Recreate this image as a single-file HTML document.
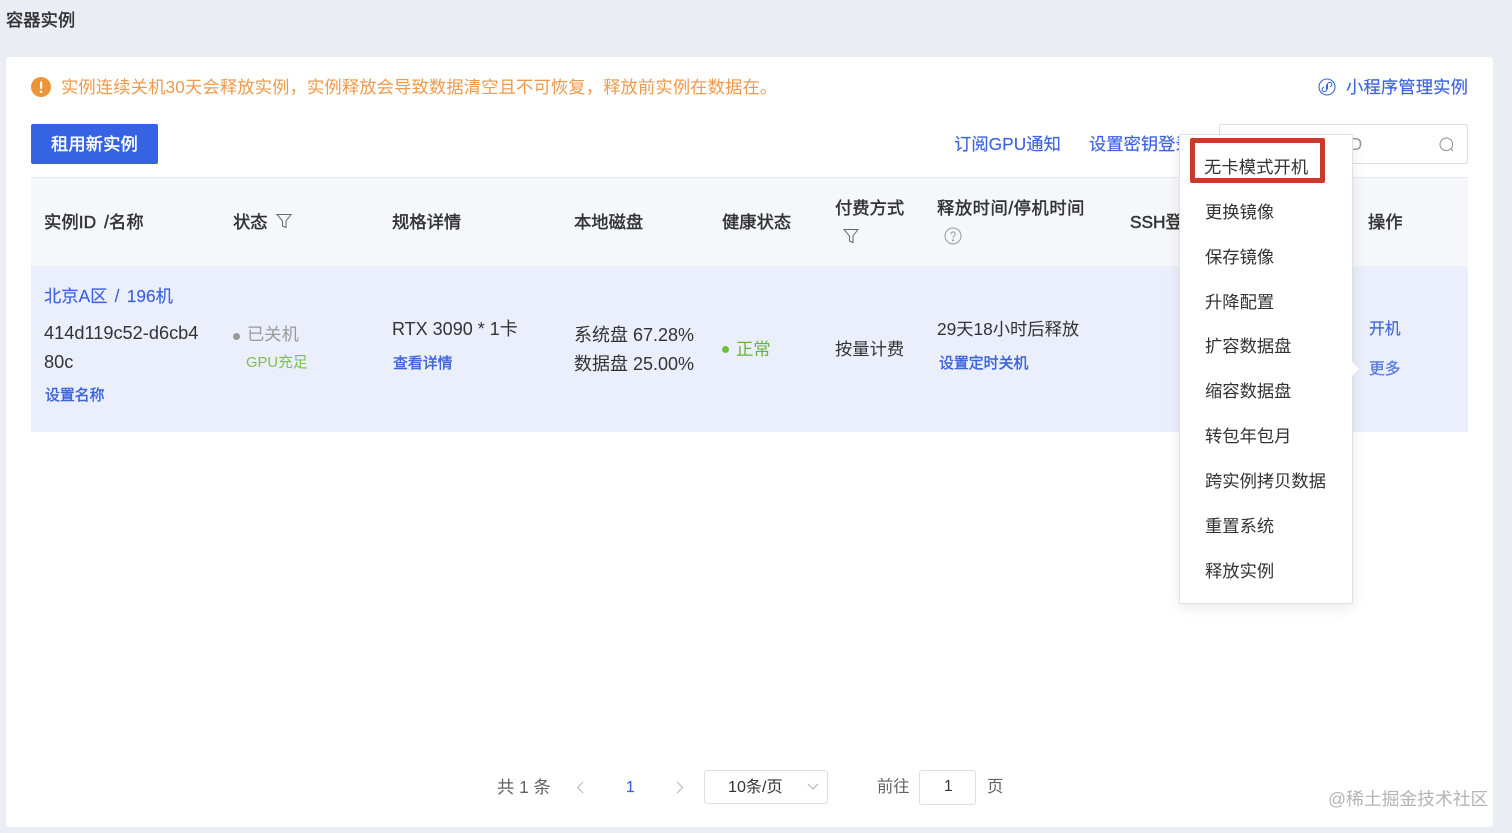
<!DOCTYPE html>
<html lang="zh"><head><meta charset="utf-8"><title>容器实例</title>
<style>
html,body{margin:0;padding:0;width:1512px;height:833px;overflow:hidden;background:#ebedf5}
body{position:relative;font-family:"Liberation Sans","Noto Sans CJK SC",sans-serif;color:#303133}
.b{position:absolute;box-sizing:border-box}
.t{position:absolute;white-space:nowrap;line-height:20px;font-size:17.3px;color:#333}
.h{-webkit-text-stroke:.45px currentColor}
.l{color:#3d63dd;-webkit-text-stroke:.15px currentColor}
.s{font-size:14.9px;color:#3d63dd;-webkit-text-stroke:.4px currentColor}
svg{position:absolute;overflow:visible}
</style></head><body>
<div class="t h" style="left:6px;top:10px;font-size:17.3px;color:#333">容器实例</div>
<div class="b" style="left:6px;top:57px;width:1487px;height:770px;background:#fff;border-radius:3px"></div>

<svg style="left:31px;top:77px" width="20" height="20"><circle cx="10" cy="10" r="10" fill="#ee9438"/><rect x="9" y="4.500" width="2.200" height="7.500" rx="1" fill="#fff"/><circle cx="10" cy="14.800" r="1.300" fill="#fff"/></svg>
<div class="t" style="left:61px;top:77px;color:#ee9a4d;letter-spacing:.14px">实例连续关机30天会释放实例，实例释放会导致数据清空且不可恢复，释放前实例在数据在。</div>
<svg style="left:1318px;top:78px" width="18" height="18" fill="none" stroke="#3d63dd" stroke-width="1.100"><circle cx="9" cy="9" r="8"/><path d="M8.500 6.500v5a2.200 2.200 0 1 1-2.400-2.200M9.500 11.500v-5a2.200 2.200 0 1 1 2.400 2.200"/></svg>
<div class="t l" style="left:1346px;top:77px;letter-spacing:.15px">小程序管理实例</div>

<div class="b" style="left:31px;top:124px;width:127px;height:40px;background:#3563e3;border-radius:2px"></div>
<div class="t h" style="left:51px;top:134px;color:#fff;letter-spacing:.1px">租用新实例</div>
<div class="t l" style="left:954px;top:134px;letter-spacing:.05px">订阅GPU通知</div>
<div class="t l" style="left:1089px;top:134px">设置密钥登录</div>
<div class="b" style="left:1219px;top:124px;width:249px;height:40px;background:#fff;border:1px solid #dcdfe6;border-radius:2px"></div>
<div class="t" style="left:1345px;top:134px;color:#999">ID</div>
<svg style="left:1439px;top:137px" width="16" height="16" fill="none" stroke="#8a8f99" stroke-width="1"><circle cx="7.300" cy="7.300" r="6.300"/><path d="M12 12l2 2"/></svg>

<!-- table header -->
<div class="b" style="left:31px;top:177px;width:1437px;height:89px;background:#f5f7fb;border-top:1px solid #e6e8ee"></div>
<div class="t h" style="left:44px;top:212px;letter-spacing:.1px;word-spacing:3px">实例ID /名称</div>
<div class="t h" style="left:233px;top:212px">状态</div>
<svg style="left:276px;top:213px" width="16" height="16" fill="none" stroke="#666" stroke-width="1"><path d="M1 1.500h14L10 8v6.500L6.500 13V8z"/></svg>
<div class="t h" style="left:392px;top:212px">规格详情</div>
<div class="t h" style="left:574px;top:212px">本地磁盘</div>
<div class="t h" style="left:722px;top:212px">健康状态</div>
<div class="t h" style="left:835px;top:198px">付费方式</div>
<svg style="left:843px;top:228px" width="16" height="16" fill="none" stroke="#666" stroke-width="1"><path d="M1 1.500h14L10 8v6.500L6.500 13V8z"/></svg>
<div class="t h" style="left:937px;top:198px;letter-spacing:.55px">释放时间/停机时间</div>
<svg style="left:944px;top:227px" width="18" height="18" fill="none" stroke="#999" stroke-width="1"><circle cx="9" cy="9" r="8"/><path d="M6.800 7.200a2.200 2.200 0 1 1 3.400 1.800c-.8.500-1.200 1-1.200 2"/><circle cx="9" cy="13.200" r=".5" fill="#999"/></svg>
<div class="t h" style="left:1130px;top:212px">SSH登录</div>
<div class="t h" style="left:1368px;top:212px">操作</div>

<!-- row -->
<div class="b" style="left:31px;top:266px;width:1437px;height:166px;background:#ebeffb"></div>
<div class="t l" style="left:44px;top:286px;word-spacing:2.500px">北京A区 / 196机</div>
<div class="t" style="left:44px;top:323px;font-size:18.200px">414d119c52-d6cb4</div>
<div class="t" style="left:44px;top:352px;font-size:18.200px">80c</div>
<div class="t s" style="left:45px;top:386px">设置名称</div>
<div class="b" style="left:233px;top:333px;width:7px;height:7px;border-radius:50%;background:#999"></div>
<div class="t" style="left:247px;top:324px;color:#999">已关机</div>
<div class="t" style="left:246px;top:353px;font-size:14.800px;color:#7fbf4d">GPU充足</div>
<div class="t" style="left:392px;top:319px;font-size:18px">RTX 3090 * 1卡</div>
<div class="t s" style="left:393px;top:354px">查看详情</div>
<div class="t" style="left:574px;top:325px;font-size:18px">系统盘 67.28%</div>
<div class="t" style="left:574px;top:354px;font-size:18px">数据盘 25.00%</div>
<div class="b" style="left:722px;top:346px;width:7px;height:7px;border-radius:50%;background:#67c23a"></div>
<div class="t" style="left:736px;top:339px;color:#67b23a">正常</div>
<div class="t" style="left:835px;top:339px">按量计费</div>
<div class="t" style="left:937px;top:319px">29天18小时后释放</div>
<div class="t s" style="left:939px;top:354px">设置定时关机</div>
<div class="t h l" style="left:1369px;top:320px;font-size:15.800px">开机</div>
<div class="t" style="left:1369px;top:360px;font-size:15.800px;-webkit-text-stroke:.3px #5a7ce6;color:#5a7ce6">更多</div>

<!-- dropdown -->
<div class="b" style="left:1179px;top:134px;width:174px;height:470px;background:#fff;border:1px solid #dfe1e7;border-radius:2px;box-shadow:0 4px 14px rgba(0,0,0,.09)"></div>
<div class="b" style="left:1352px;top:362px;width:0;height:0;border-left:7px solid #fff;border-top:7px solid transparent;border-bottom:7px solid transparent"></div>
<div class="b" style="left:1190px;top:138px;width:135px;height:45px;border:5px solid #c93a2b;border-radius:2px"></div>
<div class="t" style="left:1204px;top:157px;letter-spacing:.1px">无卡模式开机</div>
<div class="t" style="left:1205px;top:202px">更换镜像</div>
<div class="t" style="left:1205px;top:247px">保存镜像</div>
<div class="t" style="left:1205px;top:292px">升降配置</div>
<div class="t" style="left:1205px;top:336px">扩容数据盘</div>
<div class="t" style="left:1205px;top:381px">缩容数据盘</div>
<div class="t" style="left:1205px;top:426px">转包年包月</div>
<div class="t" style="left:1205px;top:471px">跨实例拷贝数据</div>
<div class="t" style="left:1205px;top:516px">重置系统</div>
<div class="t" style="left:1205px;top:561px">释放实例</div>

<!-- pagination -->
<div class="t" style="left:497px;top:777px;color:#606266">共 1 条</div>
<svg style="left:576px;top:781px" width="9" height="13" fill="none" stroke="#b5b8bf" stroke-width="1.100"><path d="M7 1L1.500 6.500 7 12"/></svg>
<div class="t h l" style="left:626px;top:778px;font-size:15.500px">1</div>
<svg style="left:675px;top:781px" width="9" height="13" fill="none" stroke="#b5b8bf" stroke-width="1.100"><path d="M2 1l5.500 5.500L2 12"/></svg>
<div class="b" style="left:704px;top:770px;width:124px;height:34px;border:1px solid #dcdfe6;border-radius:3px"></div>
<div class="t" style="left:728px;top:777px;color:#333;font-size:16.100px">10条/页</div>
<svg style="left:807px;top:783px" width="12" height="8" fill="none" stroke="#aaaeb6" stroke-width="1"><path d="M1 1l5 5 5-5"/></svg>
<div class="t" style="left:877px;top:777px;color:#606266;font-size:16.300px">前往</div>
<div class="b" style="left:919px;top:770px;width:57px;height:35px;border:1px solid #dcdfe6;border-radius:3px"></div>
<div class="t" style="left:944px;top:777px;font-size:15.500px;color:#333">1</div>
<div class="t" style="left:987px;top:777px;color:#606266;font-size:16.300px">页</div>

<div class="t" style="left:1328px;top:789px;color:#b4b4b4;font-size:17.800px">@稀土掘金技术社区</div>
</body></html>
